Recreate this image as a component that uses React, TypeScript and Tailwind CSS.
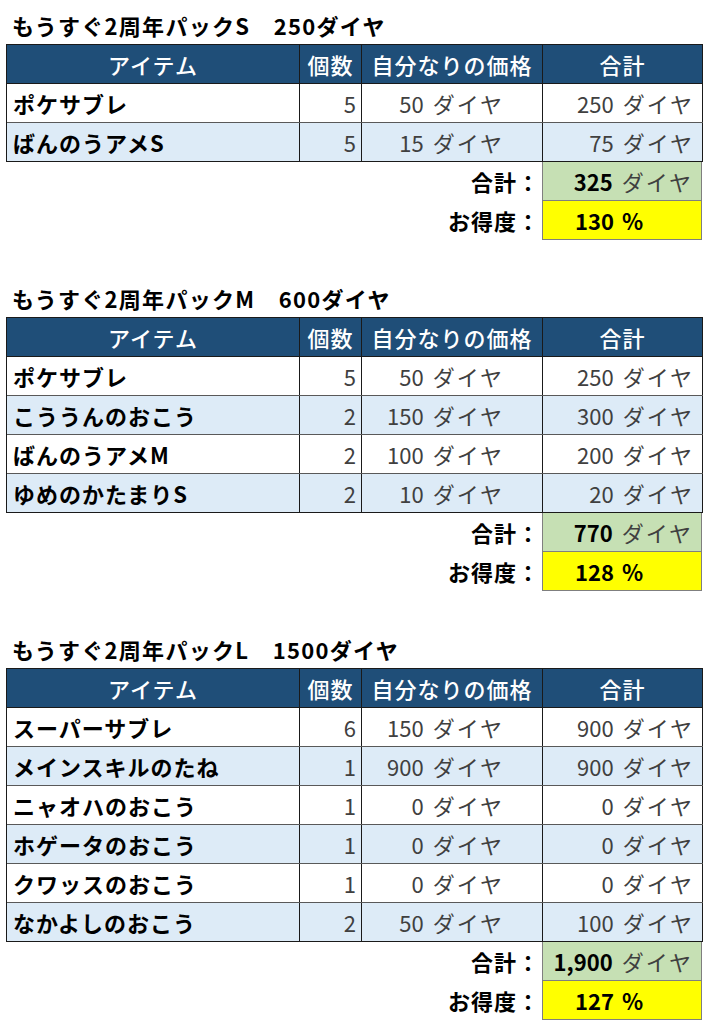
import React from "react";

type Row = { name: string; qty: number; price: string; total: string };
type Pack = { title: string; rows: Row[]; sum: string; pct: string };

const packs: Pack[] = [
  {
    title: "もうすぐ2周年パックS　250ダイヤ",
    rows: [
      { name: "ポケサブレ", qty: 5, price: "50", total: "250" },
      { name: "ばんのうアメS", qty: 5, price: "15", total: "75" },
    ],
    sum: "325",
    pct: "130",
  },
  {
    title: "もうすぐ2周年パックM　600ダイヤ",
    rows: [
      { name: "ポケサブレ", qty: 5, price: "50", total: "250" },
      { name: "こううんのおこう", qty: 2, price: "150", total: "300" },
      { name: "ばんのうアメM", qty: 2, price: "100", total: "200" },
      { name: "ゆめのかたまりS", qty: 2, price: "10", total: "20" },
    ],
    sum: "770",
    pct: "128",
  },
  {
    title: "もうすぐ2周年パックL　1500ダイヤ",
    rows: [
      { name: "スーパーサブレ", qty: 6, price: "150", total: "900" },
      { name: "メインスキルのたね", qty: 1, price: "900", total: "900" },
      { name: "ニャオハのおこう", qty: 1, price: "0", total: "0" },
      { name: "ホゲータのおこう", qty: 1, price: "0", total: "0" },
      { name: "クワッスのおこう", qty: 1, price: "0", total: "0" },
      { name: "なかよしのおこう", qty: 2, price: "50", total: "100" },
    ],
    sum: "1,900",
    pct: "127",
  },
];

const cols = "grid grid-cols-[293px_62px_181px_160px]";

function Diamond({ v }: { v: string }) {
  return (
    <span>
      {v}
      <span className="ml-[9px] tracking-[2px]">ダイヤ</span>
    </span>
  );
}

function Section({ p, first }: { p: Pack; first: boolean }) {
  return (
    <div className={first ? "" : "mt-[43px]"}>
      <div className="h-[30px] leading-[30px] pl-[12px] text-[22px] font-bold text-black tracking-[1.3px] whitespace-nowrap">
        {p.title}
      </div>
      <div className="mt-[4px] ml-[6px] w-[697px]">
        <div className="border-t border-l border-[#1a1a1a]">
          <div className={`${cols} h-[39px] bg-[#1f4e78] border-b border-[#1a1a1a] text-white text-[22px] font-medium`}>
            <div className="flex items-center justify-center border-r border-[#1a1a1a] tracking-[1px]">アイテム</div>
            <div className="flex items-center justify-center border-r border-[#1a1a1a] tracking-[1px]">個数</div>
            <div className="flex items-center justify-center border-r border-[#1a1a1a] tracking-[1px]">自分なりの価格</div>
            <div className="flex items-center justify-center border-r border-[#1a1a1a] tracking-[1px]">合計</div>
          </div>
          {p.rows.map((r, i) => (
            <div
              key={i}
              className={`${cols} h-[39px] border-b ${i === p.rows.length - 1 ? "border-[#1a1a1a]" : "border-[#595959]"} ${i % 2 === 1 ? "bg-[#ddebf7]" : "bg-white"} text-[22px]`}
            >
              <div className="flex items-center pl-[6px] border-r border-[#1a1a1a] font-bold text-black tracking-[1px] whitespace-nowrap">
                {r.name}
              </div>
              <div className="flex items-center justify-end pr-[5px] border-r border-[#1a1a1a] text-[#404040]">
                {r.qty}
              </div>
              <div className="flex items-center justify-end pr-[38px] border-r border-[#1a1a1a] text-[#404040]">
                <Diamond v={r.price} />
              </div>
              <div className="flex items-center justify-end pr-[8px] border-r border-[#1a1a1a] text-[#404040]">
                <Diamond v={r.total} />
              </div>
            </div>
          ))}
        </div>
        <div className={`${cols} h-[39px] text-[22px]`}>
          <div className="col-span-3 flex items-center justify-end pr-[2px] font-bold text-black tracking-[1px]">合計：</div>
          <div className="flex items-center justify-end pr-[8px] bg-[#c6e0b4] border-l border-r border-b border-[#7f7f7f] text-[#404040]">
            <span>
              <span className="font-bold text-black">{p.sum}</span>
              <span className="ml-[9px] tracking-[2px]">ダイヤ</span>
            </span>
          </div>
        </div>
        <div className={`${cols} h-[39px] text-[22px]`}>
          <div className="col-span-3 flex items-center justify-end pr-[2px] font-bold text-black tracking-[1px]">お得度：</div>
          <div className="flex items-center pl-[32px] bg-[#ffff00] border-l border-r border-b border-[#7f7f7f] font-bold text-black">
            {p.pct}
            <span className="ml-[8px]">%</span>
          </div>
        </div>
      </div>
    </div>
  );
}

export default function App() {
  return (
    <div
      className="w-[708px] h-[1024px] bg-white pt-[10px] overflow-hidden"
      style={{ fontFamily: '"Noto Sans CJK JP", "Noto Sans", sans-serif' }}
    >
      {packs.map((p, i) => (
        <Section key={i} p={p} first={i === 0} />
      ))}
    </div>
  );
}
